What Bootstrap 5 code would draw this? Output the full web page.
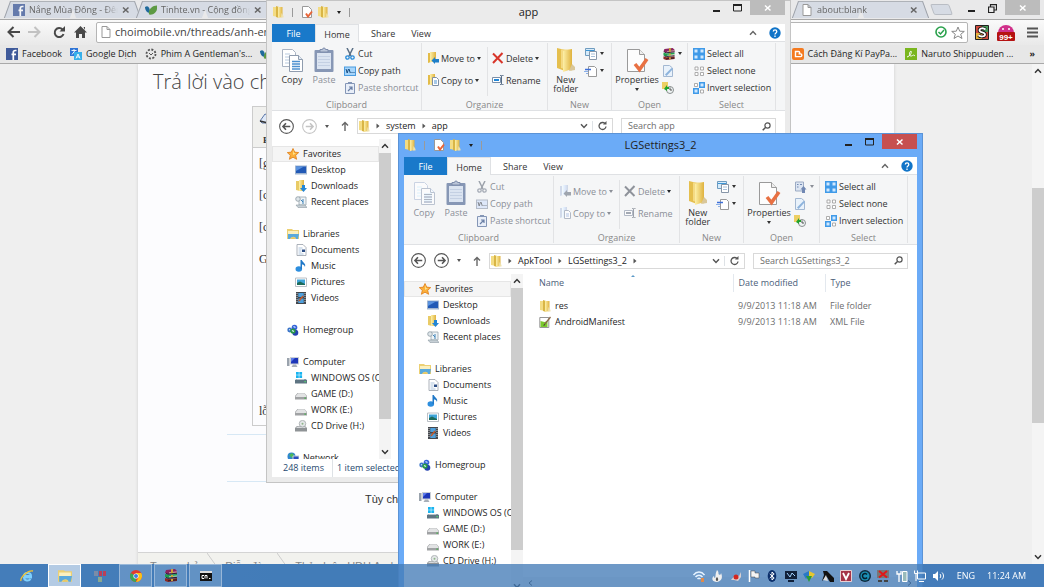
<!DOCTYPE html>
<html lang="en">
<head>
<meta charset="utf-8">
<meta name="viewport" content="width=device-width, initial-scale=1">
<title>Desktop</title>
<link href="https://cdn.jsdelivr.net/npm/bootstrap@5.3.0/dist/css/bootstrap.min.css" rel="stylesheet">
<style>
:root{--ui:"Open Sans","Noto Sans",sans-serif}
body{font:9px/16px var(--ui);color:#1e1e1e;background:linear-gradient(90deg,#4c88c6,#4380be 30%,#4a84c6);overflow:hidden}
a{color:inherit;text-decoration:none}
svg{display:block;flex:none}
.btn{--bs-btn-padding-x:0;--bs-btn-padding-y:0;--bs-btn-border-width:0;--bs-btn-font-size:9px;--bs-btn-line-height:9px;--bs-btn-border-radius:0;--bs-btn-color:#333;font-family:var(--ui)}
.btn:disabled{opacity:1;color:#8b8f97}
.btn:disabled svg.tint{filter:grayscale(1) sepia(.35) hue-rotate(180deg) saturate(1.4) opacity(.65)}
.i12{width:12px;height:12px}.i14{width:14px;height:12px}
/* browser */
.browser{height:calc(100vh - 23px);background:#efefef}
.tabstrip{height:19px;background:#e9e9ea;padding-left:7px}
.tab{position:relative;width:132px;height:18px;padding:1px 9px 0 6px;color:#666;z-index:0}
.tab::before,.tab::after{content:"";position:absolute;z-index:-1;top:1px;bottom:0;background:#d6dbe4;border-top:1px solid #aeb2b8}
.tab::before{left:0;right:50%;transform:skewX(-20deg);border-left:1px solid #9da1a8}
.tab::after{left:50%;right:1px;transform:skewX(20deg);border-right:1px solid #9da1a8}
.tab .label{white-space:nowrap;overflow:hidden;-webkit-mask-image:linear-gradient(90deg,#000 85%,transparent)}
.tabgap{width:524px}
.newtab{width:19px;height:11px;margin:4px 0 0 5px;background:#d6dbe4;border:1px solid #b9bdc4;transform:skewX(20deg);border-radius:2px}
.winbtn{width:35px;height:15px;background:#bcbcbc;color:#fff}
.toolbar{height:27px;background:linear-gradient(#fafafa,#e9e9e9);border-top:1px solid #a8a8a8;padding:0 6px 0 7px}
.omni{height:21px;border:1px solid #b5b5b5;border-radius:2px;background:#fff;padding:0 2px 0 4px;margin:0 7px 0 9px}
.omni input{border:0;outline:0;background:none;font:11px/18px var(--ui);color:#444;min-width:0;width:100%;padding:0}
.marks{height:19px;background:#e7e7e7;border-bottom:1px solid #a9a9a9;padding:0 9px 0 6px;white-space:nowrap}
.sheet{width:756px;background:#fcfcfe;box-shadow:0 0 3px #ccc;color:#333}
.sheet h1{font:300 20px/28px var(--ui);color:#444;padding:4px 0 0 15px;margin:0;height:42px}
.editor{margin:0 0 0 114px;width:480px;height:320px;border:1px solid #ccc;background:#fcfcfe}
.edbar{height:41px;background:#f0f0ee;border-bottom:1px solid #ccc;padding:5px 6px}
.edtext{font:12px/16px "Liberation Serif",serif;padding:7px 6px;height:278px}
.rule{border-top:1px solid #d7e8f5;margin:0 60px 0 89px}
.rule2{margin-top:46px}
.crumbs{height:22px;background:#f2f2ee;border-top:1px solid #d4d4d4;font:11px/26px "Liberation Sans",sans-serif;color:#888;padding-left:12px}
.vbar{width:12px;background:#f4f4f4;flex:none;color:#333}
.thumb{background:#cdcdcd}
/* explorer windows */
.win{position:absolute;width:525px;padding:0 6px 6px;background:#ebebeb;box-shadow:inset 0 0 0 1px #c4c4c4}
.win.on{background:#6babf7;box-shadow:inset 0 0 0 1px #5b93d6}
.w1{left:266px;top:0;height:483px}
.w2{left:398px;top:133px;height:470px}
.title{height:24px}
.title h2{font:11px/24px var(--ui);margin:0;color:#222}
.title .quick{position:absolute;left:0;top:6px;gap:4px}
.title .ctl{position:absolute;right:0;top:0}
.on .title .ctl{top:1px}
.on .winbtn{background:#c75050}
.bar1{width:1px;height:9px;background:#9a9a9a}
.rtabs{height:18px;background:#fff;border-bottom:1px solid #dfe1e4;line-height:19px}
.rtabs button{height:18px;padding:1px 0 0;line-height:17px}
.filetab{width:43px;background:#1979ca!important;color:#fff!important}
.hometab{width:44px;background:#f5f6f7!important;border:1px solid #dfe1e4!important;border-bottom:0!important}
.ribbon{height:70px;background:#f5f6f7;border-bottom:1px solid #dfe1e4}
.grp{border-right:1px solid #e2e3e5;margin-top:1px;height:67px}
.grp .area{height:53px;padding-top:2px}
.grp .cap{height:16px;line-height:18px;text-align:center;color:#888}
.g1{width:150px}.g2{width:126px}.g3{width:64px}.g4{width:76px}.g5{width:88px}
.g2 .area,.g5 .area{padding-left:5px}
.r17 .btn{height:17px;display:flex;align-items:center;gap:2px;white-space:nowrap}
.r22 .btn{height:22px;display:flex;align-items:center;gap:2px;white-space:nowrap}
.big{width:32px;display:flex;flex-direction:column;align-items:center;line-height:9px}
.big svg{width:24px;height:26px;margin:2px 0}
.split{border-right:1px solid #e2e3e5;width:61px}
.dn{width:0;height:0;border:2px solid transparent;border-top:3px solid currentColor;border-bottom:0;flex:none}
.addr{height:29px;background:#fff;padding:2px 9px 0 7px;color:#555}
.addr .path{height:16px;border:1px solid #d9d9d9;color:#222}
.addr .path svg{color:#555}
.addr .sep{margin:0 6px}
.addr .search{width:155px;height:16px;border:1px solid #d9d9d9}
.addr input{border:0;outline:0;background:none;font:9px/14px var(--ui);color:#555;width:130px;padding:0 0 0 6px}
.addr input::placeholder{color:#6d6d6d;opacity:1}
.pane{background:#fff;min-height:0}
.tree{width:107px;flex:none;padding-top:7px;overflow:hidden;white-space:nowrap}
.tree a{display:flex;align-items:center;gap:4px;height:16px;padding-left:15px}
.tree a.sub{padding-left:23px}
.tree .sel{background:#f5f5f5;box-shadow:inset 0 0 0 1px #e6e6e6}
.tree .gap{height:16px}
.status{height:18px;background:#fff;color:#274a70;padding-left:11px;line-height:18px}
.files{table-layout:fixed;border-collapse:collapse;width:100%}
.files th{font-weight:400;color:#4c607a;height:18px;padding:0 0 0 5px;border-left:1px solid #e3e8ee}
.files td{padding:0 0 0 5px;height:16px;color:#6d6d6d;white-space:nowrap}
.files th:first-child,.files td:first-child{padding-left:16px;border-left:0;color:#1e1e1e}
.files th:first-child{color:#4c607a}
.files thead::after{content:"";display:block;height:6px}
.sorted{position:absolute;left:108px;top:1px;width:0;height:0;border:2px solid transparent;border-bottom:2px solid #5c9ac8;border-top:0}
.hbar{height:12px;background:#f0f0f0;padding:0 5px}
/* taskbar */
.task{height:23px;background:rgba(67,122,182,.77);color:#fff;padding-right:3px}
.task .tb{height:23px;width:33px;margin-right:2px;display:flex;align-items:center;justify-content:center}
.task .run{background:rgba(255,255,255,.17);border:1px solid rgba(255,255,255,.35)}
.task .cur{background:rgba(255,255,255,.6);border:1px solid #fff}
.tray{width:252px}
.clock{width:50px}
</style>
</head>
<body class="vh-100 position-relative">

<svg width="0" height="0" class="position-absolute">
<defs>
<linearGradient id="gf" x1="0" x2="1"><stop offset="0" stop-color="#fdf0a8"/><stop offset="1" stop-color="#dfb23e"/></linearGradient>
<symbol id="folder" viewBox="0 0 12 12"><path d="M1 1h3l2 1v9l-5-1z" fill="#f3dc84"/><path d="M4 0l3 1v11l-3-1z" fill="#d9b545"/><path d="M6 1h4.500v10L6 12z" fill="url(#gf)"/><path d="M9.500 7l2 3v1.500H9z" fill="#efe2ae"/></symbol>
<symbol id="check" viewBox="0 0 12 12"><path d="M1.500.5h6l3 3v8h-9z" fill="#fff" stroke="#999"/><path d="M5 7.500l2 3L11 5.500" fill="none" stroke="#e8663a" stroke-width="2"/></symbol>
<symbol id="bigcopy" viewBox="0 0 24 26"><path d="M2.500 2.500h10l3 3v14h-13z" fill="#fff" stroke="#a9b3c2"/><path d="M5 7h5M5 10h6M5 13h6M5 16h4" stroke="#b7c9de"/><path d="M9.500 8.500h9l4 4v12h-13z" fill="#fff" stroke="#8f9cae"/><path d="M18.500 8.500v4h4" fill="#e4ecf6" stroke="#8f9cae"/><path d="M12 14.500h8M12 17h8M12 19.500h8M12 22h8" stroke="#4d91d0" stroke-width="1.500"/></symbol>
<symbol id="bigpaste" viewBox="0 0 24 26"><rect x="2.500" y="3" width="19" height="22" rx="1" fill="#8797b5"/><path d="M5 6h14v16H5z" fill="#dbe4f1"/><path d="M6 9.500h12M6 12.500h12M6 15.500h12M6 18.500h12" stroke="#c4d0e3"/><path d="M8 5V2.500h2.500a1.500 1.500 0 013 0H16V5z" fill="#b9c4d8" stroke="#7d8cab"/></symbol>
<symbol id="bigfolder" viewBox="0 0 24 26"><path d="M3 1l8 2v21l-8-3z" fill="#e5bf4e"/><path d="M7 2.500h11v21L7 21z" fill="#f4da84"/><path d="M9 4l9-2v20l-9 3z" fill="url(#gf)"/><path d="M18 17l3 3v3l-6 1z" fill="#d9c79a"/></symbol>
<symbol id="bigprops" viewBox="0 0 24 26"><path d="M2.500 2.500h12l5 5v17h-17z" fill="#fdfdfd" stroke="#9a9a9a"/><path d="M14.500 2.500v5h5" fill="#eee" stroke="#9a9a9a"/><path d="M10 17l4.500 5.500L22 12" fill="none" stroke="#e87042" stroke-width="3.500"/></symbol>
<symbol id="cut" viewBox="0 0 12 12"><path d="M3 0l4 8M9 0L5 8" stroke="#5a6f86" stroke-width="1.500"/><circle cx="3.500" cy="9.500" r="1.700" fill="none" stroke="#2589d8" stroke-width="1.300"/><circle cx="8.500" cy="9.500" r="1.700" fill="none" stroke="#2589d8" stroke-width="1.300"/></symbol>
<symbol id="cpath" viewBox="0 0 12 12"><rect x=".5" y="2" width="11" height="8.500" fill="#a6d5fb" stroke="#4a9ce0"/><path d="M2 4l1.200 4L4.500 4M5 4l1.300 4M7.500 7.500H8.500M9.500 7.500h1" fill="none" stroke="#174c80"/></symbol>
<symbol id="pshort" viewBox="0 0 12 12"><path d="M1.500 1.500h9v10h-9z" fill="#e8eef8" stroke="#8496b6"/><path d="M4 0h4v2H4z" fill="#8496b6"/><path d="M4 9l3.500-3.500M5 5h3v3" fill="none" stroke="#6b80a6" stroke-width="1.200"/></symbol>
<symbol id="moveto" viewBox="0 0 12 12"><path d="M1 1h3v9l-3 1z" fill="#e3bc48"/><path d="M3 0h6v10H3z" fill="url(#gf)"/><path d="M4.500 8.500L8 5v2h4v3.500H8v1.500z" fill="#1e7fc9"/></symbol>
<symbol id="copyto" viewBox="0 0 12 12"><path d="M1 1h3v9l-3 1z" fill="#e3bc48"/><path d="M3 0h5v11H3z" fill="url(#gf)"/><path d="M5.500 3.500h4l2 2v6h-6z" fill="#fff" stroke="#7e8ea3"/><path d="M7 7h3M7 9h3" stroke="#4d91d0"/></symbol>
<symbol id="del" viewBox="0 0 12 12"><path d="M1 1.500l9.500 9.500M10.500 1L1 11" stroke="#d8352a" stroke-width="2"/></symbol>
<symbol id="ren" viewBox="0 0 12 12"><path d="M.5 3.500h8v5h-8z" fill="#fff" stroke="#7a8fa8"/><path d="M2 5h5v2H2z" fill="#1f86d8"/><path d="M8 1.500c1.500 0 1.500 0 1.500 1v7c0 1 0 1-1.500 1M11.500 1.500c-2 0-2 0-2 1v7c0 1 0 1 2 1" fill="none" stroke="#556b85"/></symbol>
<symbol id="nitem" viewBox="0 0 14 12"><path d="M1.500.5h9v7h-9z" fill="#d6ebfa" stroke="#6f9cc0"/><path d="M2 2.500h8" stroke="#3d95d5"/><path d="M5.500 3.500h7v8h-7z" fill="#fff" stroke="#8796a8"/><path d="M7 6h4M7 8.500h4" stroke="#a7bfd8"/></symbol>
<symbol id="easy" viewBox="0 0 14 12"><path d="M4.500 1.500h6l2 2v8h-8z" fill="#fff" stroke="#999"/><path d="M1 4.500h6" stroke="#3d6fd8" stroke-width="1.500"/><path d="M0 6.500h4M2 8.500h2" stroke="#8bb0e8"/></symbol>
<symbol id="rar" viewBox="0 0 14 13"><path d="M2 1l9-1 2 2v2L4 5 1 4z" fill="#8a2460"/><path d="M1 5l3 1 9-1v2L4 9 1 8z" fill="#1fa04e"/><path d="M1 9l3 1 9-1v3l-9 1-3-1z" fill="#8c2a24"/><path d="M2 4.500l2 .7 9-1M2 8.500l2 .8 9-1M4 11.800l9-1" fill="none" stroke="#2a1a2a"/><path d="M5 3.800l8-.9M5 7.800l8-.9" stroke="#e8e3c8" stroke-width=".7"/><path d="M7 0l2 0v4l-2 .3zM7 6h2v2H7zM7 10h2v2H7z" fill="#c9a33a"/></symbol>
<symbol id="openg" viewBox="0 0 14 12"><path d="M1.500 1h8v9h-8z" fill="#dce5f2" stroke="#9cabc4"/><path d="M3 3.500h1.500M3 6h1.500M6 3.500h2" stroke="#7188b3"/><path d="M9.500 5l3 3.500h-1.500V12H8V8.500H6.500z" fill="#7188b3"/></symbol>
<symbol id="edit" viewBox="0 0 12 12"><path d="M1.500.500h6l3 2.500v8.500h-9z" fill="#e9f2fb" stroke="#a3b8d2"/><path d="M3 9.500L9.500 3l1.500 1L4.500 11z" fill="#8db3dc"/></symbol>
<symbol id="hist" viewBox="0 0 12 12"><path d="M0 0h6v7H0z" fill="#edcf63"/><circle cx="8" cy="8" r="3.500" fill="#eef3f3" stroke="#8a8f8f"/><path d="M8 5.500V8h2" fill="none" stroke="#555"/><path d="M2 7l3-4v2h2v2H5v2z" fill="#21a32c"/></symbol>
<symbol id="sall" viewBox="0 0 12 12"><path d="M0 0h12v12H0z" fill="#3f9ae8"/><path d="M1.500 1.500h3v3h-3zM7.500 1.500h3v3h-3zM1.500 7.500h3v3h-3zM7.500 7.500h3v3h-3z" fill="#cfe8ff"/></symbol>
<symbol id="snone" viewBox="0 0 12 12"><path d="M2 2h3v3H2zM7.500 2h3v3h-3zM2 7.500h3v3H2zM7.500 7.500h3v3h-3z" fill="#fff" stroke="#9a9a9a" stroke-width=".8"/></symbol>
<symbol id="sinv" viewBox="0 0 12 12"><path d="M1.500 1.500h3v3h-3zM7.500 8h3v3h-3z" fill="#fff" stroke="#9a9a9a" stroke-width=".8"/><path d="M6 0h6v6H6zM0 6h6v6H0z" fill="#3f9ae8"/><path d="M7.500 1.500h3v3h-3zM1.500 7.500h3v3h-3z" fill="#cfe8ff"/></symbol>
<symbol id="back" viewBox="0 0 14 14"><circle cx="7" cy="7" r="6.400" fill="none" stroke="currentColor"/><path d="M10.500 7H4M6.500 4L3.700 7l2.800 3" fill="none" stroke="currentColor" stroke-width="1.500"/></symbol>
<symbol id="fwd" viewBox="0 0 14 14"><circle cx="7" cy="7" r="6.400" fill="none" stroke="currentColor"/><path d="M3.500 7H10M7.500 4l2.800 3-2.800 3" fill="none" stroke="currentColor" stroke-width="1.500"/></symbol>
<symbol id="up" viewBox="0 0 8 10"><path d="M4 10V1.500M1 4.500l3-3 3 3" fill="none" stroke="#666" stroke-width="1.400"/></symbol>
<symbol id="cv" viewBox="0 0 6 5"><path d="M.5 1L3 3.700 5.500 1" fill="none" stroke="currentColor" stroke-width="1.200"/></symbol>
<symbol id="cu" viewBox="0 0 6 5"><path d="M.5 4L3 1.300 5.500 4" fill="none" stroke="currentColor" stroke-width="1.200"/></symbol>
<symbol id="tri" viewBox="0 0 4 6"><path d="M.5.5L3.500 3 .5 5.500z" fill="#555"/></symbol>
<symbol id="re" viewBox="0 0 10 10"><path d="M7.500 2.500A3.500 3.500 0 108.500 5.500" fill="none" stroke="currentColor" stroke-width="1.300"/><path d="M5.500 3.500H9V0z" fill="currentColor"/></symbol>
<symbol id="mag" viewBox="0 0 9 9"><circle cx="5.500" cy="3.500" r="2.600" fill="none" stroke="#555" stroke-width="1.200"/><path d="M3.700 5.300L.7 8.300" stroke="#555" stroke-width="1.500"/></symbol>
<symbol id="min" viewBox="0 0 8 8"><path d="M0 6h7v2H0z" fill="#222"/></symbol>
<symbol id="max" viewBox="0 0 9 8"><path d="M.5.500h8v6.500h-8z" fill="none" stroke="#222"/><path d="M0 0h9v2H0z" fill="#222"/></symbol>
<symbol id="rest" viewBox="0 0 9 9"><path d="M.5 3h5.500v5.500H.5zM2.500 3V.7h6V6H6" fill="none" stroke="#222" stroke-width="1.200"/></symbol>
<symbol id="x" viewBox="0 0 8 8"><path d="M1 1.500l5.500 5M6.500 1.500l-5.500 5" stroke="currentColor" stroke-width="1.500"/></symbol>
<symbol id="help" viewBox="0 0 12 12"><circle cx="6" cy="6" r="5.700" fill="#1074c8"/><path d="M4.300 4.500c0-2.300 3.500-2.300 3.500 0C7.800 6 6 5.800 6 7.500M6 8.500V10" fill="none" stroke="#fff" stroke-width="1.300"/></symbol>
<symbol id="star" viewBox="0 0 12 12"><path d="M6 .5l1.700 3.600 4 .5-3 2.700.9 4L6 9.200l-3.600 2.100.9-4-3-2.700 4-.5z" fill="#fbb03b" stroke="#e07d18" stroke-width=".8"/><path d="M6 2l1 3 2 .3L6 7z" fill="#fde08a"/></symbol>
<symbol id="desk" viewBox="0 0 12 12"><path d="M0 1.500h12v9H0z" fill="#9fb4d0"/><path d="M1 2.500h10v6.500H1z" fill="#2159b6"/><path d="M1 2.500h8L1 7z" fill="#5a93e0"/></symbol>
<symbol id="down" viewBox="0 0 12 12"><path d="M1 1h4v10l-4-1z" fill="#e9cb66"/><path d="M4 0h5v11H4z" fill="url(#gf)"/><path d="M7 5h3v3h2l-3.500 4L5 8h2z" fill="#2386d6"/></symbol>
<symbol id="recent" viewBox="0 0 12 12"><path d="M4 1h7v8H4z" fill="#eef3f6" stroke="#98a5ae" stroke-width=".8"/><path d="M1 9h9l2 2.500H3z" fill="#c7d0d6" stroke="#8d9aa3" stroke-width=".6"/><circle cx="3" cy="3" r="2.300" fill="#dfe6ea" stroke="#8d9aa3" stroke-width=".8"/><path d="M6 4l2 2M8 3v5" stroke="#3f83b8"/></symbol>
<symbol id="lib" viewBox="0 0 12 12"><path d="M0 1h5l1 1h6v9H0z" fill="#ecd073"/><path d="M1 3h10v3H1z" fill="#faf0c0"/><path d="M1 6h11l-1 5H9c0-3-5-3-6 0H1z" fill="#5aa9dc"/><path d="M4 11c1-2 3-2 4 0z" fill="#e8c865"/></symbol>
<symbol id="doc" viewBox="0 0 12 12"><path d="M2 .5h6l3 3v8H2z" fill="#fff" stroke="#98a0aa" stroke-width=".8"/><path d="M3.500 4h4M3.500 6h3M3.500 8h3M3.500 10h5" stroke="#9bb6d4" stroke-width=".8"/><path d="M7 5.500h3v2.500H7z" fill="#2d4f86"/></symbol>
<symbol id="music" viewBox="0 0 12 12"><ellipse cx="3.800" cy="9" rx="3.300" ry="2.700" fill="#2d8ede"/><path d="M5.500 0h1.300c.5 2.500 4.500 3 3.200 7-.5-2-2-2.500-3-2.500V9H5.500z" fill="#2179c8"/></symbol>
<symbol id="pic" viewBox="0 0 12 12"><path d="M.5 2h11v8.500H.5z" fill="#fff" stroke="#a9b0b8" stroke-width=".8"/><path d="M2 3.500h8v5.500H2z" fill="#3fa4d8"/><path d="M2 9V7l3-1.500L10 8v1z" fill="#1d6b5a"/></symbol>
<symbol id="vid" viewBox="0 0 12 12"><path d="M1 0h10v12H1z" fill="#44484e"/><path d="M3.300 1h5.400v4H3.300zM3.300 6.500h5.400v4.500H3.300z" fill="#4fa0dc"/><path d="M4 9l4-5" stroke="#c45a2a" stroke-width="1.500"/><path d="M2 1v10M10 1v10" stroke="#ddd" stroke-width=".9" stroke-dasharray="1 1"/></symbol>
<symbol id="home" viewBox="0 0 12 12"><circle cx="7.500" cy="3.500" r="2.800" fill="#3563d8"/><circle cx="2.700" cy="6" r="2.400" fill="#3a74c8"/><circle cx="8.300" cy="8.700" r="3" fill="#2442b0"/><circle cx="6" cy="7" r="2.600" fill="#2a9a44"/><path d="M6.500 2.500l2 1M2 5.500l1 .5M5 6.500l2 1" stroke="#d7ecff" stroke-width="1.200"/></symbol>
<symbol id="comp" viewBox="0 0 12 12"><path d="M0 2h2.500v8H0z" fill="#9aa3ad"/><path d="M3 1h9v7.500H3z" fill="#c9ced6"/><path d="M4 2h7v5.500H4z" fill="#1c35b8"/><path d="M4 2h4L4 6z" fill="#5d7bea"/><path d="M6 8.500h3l1.500 2.500h-6z" fill="#a8afb8"/></symbol>
<symbol id="osd" viewBox="0 0 12 12"><path d="M0 8l2-1h8l2 1v3.500H0z" fill="#5e7482"/><path d="M1 0h2.800v2.800H1zM4.300 0h2.800v2.800H4.300zM1 3.300h2.800V6H1zM4.300 3.300h2.800V6H4.300z" fill="#18b4f0"/><path d="M2 7h7l1 1H1z" fill="#b6c3cb"/><path d="M9.500 9h1.300v1.300H9.500z" fill="#4fe06a"/></symbol>
<symbol id="hdd" viewBox="0 0 12 12"><path d="M0 8l2.500-3h7L12 8v3.500H0z" fill="#a0a2a4"/><path d="M.6 8.300L3 5.300h6.500L11.500 8.300v.7H.6z" fill="#e2e3e4"/><path d="M9.500 9.500h1.300v1.300H9.500z" fill="#37b03e"/></symbol>
<symbol id="cdd" viewBox="0 0 12 12"><path d="M0 8l2-2h8l2 2v3.500H0z" fill="#8f9396"/><path d="M1 8l1.500-1.500h7L11 8z" fill="#d8dadc"/><circle cx="7.500" cy="3.700" r="3.300" fill="#e4e7e8" stroke="#9ba0a3" stroke-width=".7"/><circle cx="7.500" cy="3.700" r="1" fill="#8fb58a"/></symbol>
<symbol id="net" viewBox="0 0 12 12"><circle cx="4.500" cy="4.500" r="4" fill="#2f86d0"/><path d="M2 3l3-2 2 2-2 3z" fill="#4db85a"/><path d="M6 4h6v5H6z" fill="#2a4dc0" stroke="#c6ced8"/></symbol>
<symbol id="xml" viewBox="0 0 12 12"><path d="M.8 1.500h9v10h-9z" fill="#fff" stroke="#8a8a8a" stroke-width=".9"/><path d="M1.500 5l4 1 3-1v6h-7z" fill="#7ac92e"/><path d="M5 8L11 .5l1 .9L6 9z" fill="#8a6a4a"/><path d="M5 8l-.5 2L6 9z" fill="#222"/></symbol>
<symbol id="fb" viewBox="0 0 12 12"><path d="M0 0h12v12H0z" fill="#3f5a9a"/><path d="M10.500 2.500H9.300C8 2.500 7.300 3.300 7.300 4.500V12M5.500 6.300h4.500" fill="none" stroke="#fff" stroke-width="1.700"/></symbol>
<symbol id="leaf" viewBox="0 0 12 12"><path d="M0 3c3-2 5 0 5 6C2 9 0 6 0 3z" fill="#1f6a9c"/><path d="M4 10.500c-1-5 3-9 8-9 1 6-3 10-8 9z" fill="#5d9a44"/></symbol>
<symbol id="page" viewBox="0 0 10 12"><path d="M1 .5h5l3 3v8H1zM6 .5v3h3" fill="#fff" stroke="#999"/></symbol>
</defs>
</svg>

<!-- browser window -->
<main class="browser d-flex flex-column overflow-hidden">
  <div class="tabstrip d-flex flex-none">
    <div class="tab d-flex align-items-center gap-1"><svg class="i12 opacity-75"><use href="#fb"/></svg><span class="label flex-fill">Nắng Mùa Đông - Đêm</span><button class="btn" aria-label="Close tab"><svg width="8" height="8" color="#666"><use href="#x"/></svg></button></div>
    <div class="tab d-flex align-items-center gap-1"><svg class="i12"><use href="#leaf"/></svg><span class="label flex-fill">Tinhte.vn - Cộng đồng</span><button class="btn" aria-label="Close tab"><svg width="8" height="8" color="#666"><use href="#x"/></svg></button></div>
    <div class="tabgap"></div>
    <div class="tab d-flex align-items-center gap-1"><svg class="i12"><use href="#page"/></svg><span class="label flex-fill">about:blank</span><button class="btn" aria-label="Close tab"><svg width="8" height="8" color="#666"><use href="#x"/></svg></button></div>
    <button class="newtab p-0" aria-label="New tab"></button>
    <div class="d-flex ms-auto gap-2"><button class="btn align-self-start mt-1 me-1" aria-label="Minimize"><svg width="8" height="8"><use href="#min"/></svg></button><button class="btn align-self-start mt-1" aria-label="Restore"><svg width="9" height="9"><use href="#rest"/></svg></button><button class="btn winbtn d-flex align-items-center justify-content-center me-1" aria-label="Close"><svg width="8" height="8"><use href="#x"/></svg></button></div>
  </div>
  <div class="toolbar d-flex align-items-center">
    <button class="btn" aria-label="Back"><svg width="13" height="12"><path d="M13 6H2M6.500 1L1.500 6l5 5" fill="none" stroke="#484848" stroke-width="2"/></svg></button>
    <button class="btn ms-2" aria-label="Forward"><svg width="13" height="12"><path d="M0 6h11M6.500 1l5 5-5 5" fill="none" stroke="#c2c2c2" stroke-width="2"/></svg></button>
    <button class="btn ms-2 ps-1" aria-label="Reload"><svg width="13" height="13"><path d="M9.500 3.500A4.500 4.500 0 1010.500 8" fill="none" stroke="#484848" stroke-width="2"/><path d="M6.500 5.500H12V0z" fill="#484848"/></svg></button>
    <button class="btn ms-2" aria-label="Home"><svg width="13" height="12"><path d="M6.500 0L13 6.500h-2V12H8V8H5v4H2V6.500H0zM9.500 1H11v3z" fill="#484848"/></svg></button>
    <div class="omni d-flex align-items-center flex-fill gap-1">
      <svg width="10" height="12"><use href="#page"/></svg>
      <input aria-label="Address" value="choimobile.vn/threads/anh-em-vao-giup">
      <svg width="12" height="12"><circle cx="6" cy="6" r="5" fill="#fff" stroke="#2aa14c" stroke-width="1.600"/><path d="M3.500 6l2 2L9 4" fill="none" stroke="#2aa14c" stroke-width="1.500"/></svg>
      <svg width="14" height="13"><path d="M7 1l1.700 4.200 4.600.2-3.600 2.900 1.300 4.200L7 10l-4 2.500 1.300-4.200L.7 5.400l4.600-.2z" fill="#fff" stroke="#888"/></svg>
    </div>
    <svg width="14" height="15" viewBox="0 0 14 15"><path d="M.5.500h13v14H.5z" fill="#cf4b3d" stroke="#222"/><path d="M7 1h6v6H7z" fill="#4a9b5a"/><path d="M1 8h6v6H1z" fill="#e5b13c"/><path d="M10.500 4.500c-2-2-6-1.500-6 .7C4.500 8 10 6.500 10 9.500c0 2.500-4.500 2.500-6.500.8" fill="none" stroke="#111" stroke-width="3.500"/><path d="M10.500 4.500c-2-2-6-1.500-6 .7C4.500 8 10 6.500 10 9.500c0 2.500-4.500 2.500-6.500.8" fill="none" stroke="#fff" stroke-width="1.800"/></svg>
    <svg class="ms-2" width="18" height="17" viewBox="0 0 18 17"><path d="M1 9a8 8 0 0116 0z" fill="#d0308a"/><circle cx="6" cy="5" r="1" fill="#fff"/><circle cx="12" cy="5" r="1" fill="#fff"/><rect y="8" width="18" height="9" rx="1" fill="#b51212"/><text x="9" y="15.500" text-anchor="middle" font-family="Liberation Sans" font-weight="700" font-size="8" fill="#fff">99+</text></svg>
    <button class="btn ms-2 ps-1" aria-label="Menu"><svg width="11" height="11"><path d="M0 1.500h11M0 5.500h11M0 9.500h11" stroke="#555" stroke-width="2.200"/></svg></button>
  </div>
  <nav class="marks d-flex align-items-center" aria-label="Bookmarks">
    <a href="#" class="d-flex align-items-center gap-1"><svg class="i12"><use href="#fb"/></svg>Facebook</a>
    <a href="#" class="d-flex align-items-center gap-1 ms-2"><svg class="i12" viewBox="0 0 12 12"><path d="M0 0h8v8H0z" fill="#2f75d6"/><path d="M4 4h8v8H4z" fill="#39b0ea"/><path d="M1.500 2.500h5M4 1v1.500M2 6.500l3-4" stroke="#fff" stroke-width=".9"/><path d="M6 10.500L8 6l2 4.500M6.700 9h2.600" fill="none" stroke="#fff" stroke-width=".9"/></svg>Google Dịch</a>
    <a href="#" class="d-flex align-items-center gap-1 ms-2"><svg class="i12" viewBox="0 0 12 12"><circle cx="6" cy="6" r="4.500" fill="none" stroke="#555" stroke-width="1.800" stroke-dasharray="2 1.500"/><path d="M4 5l2 2 2-2" stroke="#555" fill="none"/></svg>Phim A Gentleman's...</a>
    <a href="#" class="d-flex ms-2" aria-label="Tinhte"><svg class="i12"><use href="#leaf"/></svg></a>
    <a href="#" class="d-flex align-items-center gap-1 ms-auto"><svg class="i12" viewBox="0 0 12 12"><rect width="12" height="12" rx="2" fill="#f47a20"/><path d="M3.500 3.500h3a1.200 1.200 0 010 2.400h2a1.300 1.300 0 010 2.700h-5z" fill="none" stroke="#fff" stroke-width="1.400"/></svg>Cách Đăng Kí PayPa...</a>
    <a href="#" class="d-flex align-items-center gap-1 ms-2"><svg class="i12" viewBox="0 0 12 12"><path d="M0 0h12v12H0z" fill="#7ab61e"/><path d="M2 9c3-1 5-4 4-6-2 1-2 5 0 5s2-2 4 0" fill="none" stroke="#fff"/></svg>Naruto Shippuuden ...</a>
    <a href="#" class="ms-3 fw-bold">»</a>
  </nav>
  <div class="d-flex flex-fill overflow-hidden">
    <div class="flex-fill">
      <article class="sheet mx-auto">
        <h1>Trả lời vào chủ đề</h1>
        <div class="editor">
          <div class="edbar"><svg width="14" height="12" viewBox="0 0 14 12"><path d="M1 9l5-7 7 3-4 6H3z" fill="#dfe9f8" stroke="#5c77a8"/><path d="M1 9l8 2" stroke="#333" stroke-width="1.500"/></svg><b style="font-family:'Liberation Serif',serif" class="d-block mt-2 ps-1">B</b></div>
          <div class="edtext d-flex flex-column justify-content-between"><div>[g<br><br>[c<br><br>[c<br><br>G</div><div>lỗi</div></div>
        </div>
        <div class="pt-2"><div class="rule"></div><div class="rule rule2"></div></div>
        <div style="font:11px/34px 'Liberation Sans',sans-serif;height:70px;padding-left:227px">Tùy chọn</div>
        <nav class="crumbs d-flex gap-2" aria-label="Breadcrumb"><a href="#">Trang chủ</a><svg width="10" height="22"><path d="M0 0l10 14" stroke="#ccc"/></svg><a href="#">Diễn đàn</a><svg width="10" height="22"><path d="M0 0l10 14" stroke="#ccc"/></svg><a href="#">Thảo luận HDH Android</a></nav>
      </article>
    </div>
    <div class="vbar d-flex flex-column align-items-center"><svg width="8" height="6" class="my-1"><use href="#cu"/></svg><div style="height:22%"></div><div class="thumb w-100" style="height:47%"></div><svg width="8" height="6" class="mt-auto mb-1"><use href="#cv"/></svg></div>
  </div>
</main>

<!-- inactive explorer window -->
<section class="win w1 d-flex flex-column" aria-label="app">
  <header class="title position-relative text-center">
    <div class="quick d-flex align-items-center"><svg class="i12"><use href="#folder"/></svg><i class="bar1 me-1 ms-1"></i><svg class="i12"><use href="#check"/></svg><svg class="i12"><use href="#folder"/></svg><i class="dn ms-1"></i><i class="bar1 ms-1"></i></div>
    <h2>app</h2>
    <div class="ctl d-flex align-items-center"><svg width="8" height="8" class="me-2"><use href="#min"/></svg><svg width="9" height="8" class="ms-1 me-2"><use href="#max"/></svg><button class="btn winbtn d-flex align-items-center justify-content-center" aria-label="Close"><svg width="8" height="8"><use href="#x"/></svg></button></div>
  </header>
  <div class="rtabs d-flex align-items-center">
    <button class="btn filetab">File</button><button class="btn hometab">Home</button><button class="btn ms-2 px-1">Share</button><button class="btn ms-2 px-1">View</button>
    <svg width="8" height="6" color="#666" class="ms-auto me-2"><use href="#cu"/></svg><svg class="i12 ms-1 me-1"><use href="#help"/></svg>
  </div>
  <div class="ribbon d-flex">
    <div class="grp g1"><div class="area d-flex ps-1"><button class="btn big"><svg><use href="#bigcopy"/></svg>Copy</button><button class="btn big" disabled><svg><use href="#bigpaste"/></svg>Paste</button><div class="r17 ms-1"><button class="btn"><svg class="i12 tint"><use href="#cut"/></svg>Cut</button><button class="btn"><svg class="i12 tint"><use href="#cpath"/></svg>Copy path</button><button class="btn" disabled><svg class="i12"><use href="#pshort"/></svg>Paste shortcut</button></div></div><div class="cap">Clipboard</div></div>
    <div class="grp g2"><div class="area d-flex pt-1"><div class="r22 split"><button class="btn"><svg class="i12 tint"><use href="#moveto"/></svg>Move to <i class="dn"></i></button><button class="btn"><svg class="i12 tint"><use href="#copyto"/></svg>Copy to <i class="dn"></i></button></div><div class="r22 ms-1"><button class="btn"><svg class="i12 tint"><use href="#del"/></svg>Delete <i class="dn"></i></button><button class="btn"><svg class="i12 tint"><use href="#ren"/></svg>Rename</button></div></div><div class="cap">Organize</div></div>
    <div class="grp g3"><div class="area d-flex"><button class="btn big w-50 ps-1"><svg><use href="#bigfolder"/></svg>New<br>folder</button><div class="r17 ms-1"><button class="btn"><svg class="i14"><use href="#nitem"/></svg><i class="dn"></i></button><button class="btn"><svg class="i14"><use href="#easy"/></svg><i class="dn"></i></button></div></div><div class="cap">New</div></div>
    <div class="grp g4"><div class="area d-flex ps-1"><button class="btn big" style="width:42px"><svg><use href="#bigprops"/></svg>Properties<i class="dn mt-1"></i></button><div class="r17 ms-1"><button class="btn"><svg class="i14"><use href="#rar"/></svg><i class="dn"></i></button><button class="btn"><svg class="i12"><use href="#edit"/></svg></button><button class="btn"><svg class="i12"><use href="#hist"/></svg></button></div></div><div class="cap">Open</div></div>
    <div class="grp g5"><div class="area r17"><button class="btn"><svg class="i12"><use href="#sall"/></svg>Select all</button><button class="btn"><svg class="i12"><use href="#snone"/></svg>Select none</button><button class="btn"><svg class="i12"><use href="#sinv"/></svg>Invert selection</button></div><div class="cap">Select</div></div>
  </div>
  <div class="addr d-flex align-items-center gap-2">
    <svg width="15" height="15"><use href="#back"/></svg><svg width="15" height="15" color="#c4c4c4"><use href="#fwd"/></svg><i class="dn"></i><svg width="8" height="10" class="ms-1"><use href="#up"/></svg>
    <div class="path d-flex align-items-center flex-fill ms-n1"><svg class="i12"><use href="#folder"/></svg><svg width="4" height="6" class="sep"><use href="#tri"/></svg>system<svg width="4" height="6" class="sep"><use href="#tri"/></svg>app<svg width="8" height="6" class="ms-auto me-1"><use href="#cv"/></svg><span class="border-start px-1"><svg width="11" height="10"><use href="#re"/></svg></span></div>
    <div class="search d-flex align-items-center"><input aria-label="Search app" placeholder="Search app"><svg width="9" height="9" class="ms-auto me-1"><use href="#mag"/></svg></div>
  </div>
  <div class="pane d-flex flex-fill overflow-hidden">
    <nav class="tree">
      <a href="#" class="sel"><svg class="i12"><use href="#star"/></svg>Favorites</a><a href="#" class="sub"><svg class="i12"><use href="#desk"/></svg>Desktop</a><a href="#" class="sub"><svg class="i12"><use href="#down"/></svg>Downloads</a><a href="#" class="sub"><svg class="i12"><use href="#recent"/></svg>Recent places</a><div class="gap"></div>
      <a href="#"><svg class="i12"><use href="#lib"/></svg>Libraries</a><a href="#" class="sub"><svg class="i12"><use href="#doc"/></svg>Documents</a><a href="#" class="sub"><svg class="i12"><use href="#music"/></svg>Music</a><a href="#" class="sub"><svg class="i12"><use href="#pic"/></svg>Pictures</a><a href="#" class="sub"><svg class="i12"><use href="#vid"/></svg>Videos</a><div class="gap"></div>
      <a href="#"><svg class="i12"><use href="#home"/></svg>Homegroup</a><div class="gap"></div>
      <a href="#"><svg class="i12"><use href="#comp"/></svg>Computer</a><a href="#" class="sub"><svg class="i12"><use href="#osd"/></svg>WINDOWS OS (C:)</a><a href="#" class="sub"><svg class="i12"><use href="#hdd"/></svg>GAME (D:)</a><a href="#" class="sub"><svg class="i12"><use href="#hdd"/></svg>WORK (E:)</a><a href="#" class="sub"><svg class="i12"><use href="#cdd"/></svg>CD Drive (H:)</a><div class="gap"></div>
      <a href="#"><svg class="i12"><use href="#net"/></svg>Network</a>
    </nav>
    <div class="vbar d-flex flex-column align-items-center"><svg width="8" height="6" class="my-1"><use href="#cu"/></svg><div class="thumb w-100" style="height:83%"></div><svg width="8" height="6" class="mt-auto mb-1"><use href="#cv"/></svg></div>
  </div>
  <footer class="status d-flex"><span>248 items</span><span class="border-start ms-2 ps-1">1 item selected</span></footer>
</section>

<!-- active explorer window -->
<section class="win on w2 d-flex flex-column" aria-label="LGSettings3_2">
  <header class="title position-relative text-center">
    <div class="quick d-flex align-items-center"><svg class="i12"><use href="#folder"/></svg><i class="bar1 me-1 ms-1"></i><svg class="i12"><use href="#check"/></svg><svg class="i12"><use href="#folder"/></svg><i class="dn ms-1"></i><i class="bar1 ms-1"></i></div>
    <h2>LGSettings3_2</h2>
    <div class="ctl d-flex align-items-center"><svg width="8" height="8" class="me-2"><use href="#min"/></svg><svg width="9" height="8" class="ms-1 me-2"><use href="#max"/></svg><button class="btn winbtn d-flex align-items-center justify-content-center" aria-label="Close"><svg width="8" height="8"><use href="#x"/></svg></button></div>
  </header>
  <div class="rtabs d-flex align-items-center">
    <button class="btn filetab">File</button><button class="btn hometab">Home</button><button class="btn ms-2 px-1">Share</button><button class="btn ms-2 px-1">View</button>
    <svg width="8" height="6" color="#666" class="ms-auto me-2"><use href="#cu"/></svg><svg class="i12 ms-1 me-1"><use href="#help"/></svg>
  </div>
  <div class="ribbon d-flex">
    <div class="grp g1"><div class="area d-flex ps-1"><button class="btn big" disabled><svg class="tint"><use href="#bigcopy"/></svg>Copy</button><button class="btn big" disabled><svg><use href="#bigpaste"/></svg>Paste</button><div class="r17 ms-1"><button class="btn" disabled><svg class="i12 tint"><use href="#cut"/></svg>Cut</button><button class="btn" disabled><svg class="i12 tint"><use href="#cpath"/></svg>Copy path</button><button class="btn" disabled><svg class="i12"><use href="#pshort"/></svg>Paste shortcut</button></div></div><div class="cap">Clipboard</div></div>
    <div class="grp g2"><div class="area d-flex pt-1"><div class="r22 split"><button class="btn" disabled><svg class="i12 tint"><use href="#moveto"/></svg>Move to <i class="dn"></i></button><button class="btn" disabled><svg class="i12 tint"><use href="#copyto"/></svg>Copy to <i class="dn"></i></button></div><div class="r22 ms-1"><button class="btn" disabled><svg class="i12 tint"><use href="#del"/></svg>Delete <i class="dn text-dark"></i></button><button class="btn" disabled><svg class="i12 tint"><use href="#ren"/></svg>Rename</button></div></div><div class="cap">Organize</div></div>
    <div class="grp g3"><div class="area d-flex"><button class="btn big w-50 ps-1"><svg><use href="#bigfolder"/></svg>New<br>folder</button><div class="r17 ms-1"><button class="btn"><svg class="i14"><use href="#nitem"/></svg><i class="dn"></i></button><button class="btn"><svg class="i14"><use href="#easy"/></svg><i class="dn"></i></button></div></div><div class="cap">New</div></div>
    <div class="grp g4"><div class="area d-flex ps-1"><button class="btn big" style="width:42px"><svg><use href="#bigprops"/></svg>Properties<i class="dn mt-1"></i></button><div class="r17 ms-1"><button class="btn" disabled><svg class="i14"><use href="#openg"/></svg><i class="dn"></i></button><button class="btn"><svg class="i12"><use href="#edit"/></svg></button><button class="btn"><svg class="i12"><use href="#hist"/></svg></button></div></div><div class="cap">Open</div></div>
    <div class="grp g5"><div class="area r17"><button class="btn"><svg class="i12"><use href="#sall"/></svg>Select all</button><button class="btn"><svg class="i12"><use href="#snone"/></svg>Select none</button><button class="btn"><svg class="i12"><use href="#sinv"/></svg>Invert selection</button></div><div class="cap">Select</div></div>
  </div>
  <div class="addr d-flex align-items-center gap-2">
    <svg width="15" height="15"><use href="#back"/></svg><svg width="15" height="15"><use href="#fwd"/></svg><i class="dn"></i><svg width="8" height="10" class="ms-1"><use href="#up"/></svg>
    <div class="path d-flex align-items-center flex-fill ms-n1"><svg class="i12"><use href="#folder"/></svg><svg width="4" height="6" class="sep"><use href="#tri"/></svg>ApkTool<svg width="4" height="6" class="sep"><use href="#tri"/></svg>LGSettings3_2<svg width="4" height="6" class="sep"><use href="#tri"/></svg><svg width="8" height="6" class="ms-auto me-1"><use href="#cv"/></svg><span class="border-start px-1"><svg width="11" height="10"><use href="#re"/></svg></span></div>
    <div class="search d-flex align-items-center"><input aria-label="Search LGSettings3_2" placeholder="Search LGSettings3_2"><svg width="9" height="9" class="ms-auto me-1"><use href="#mag"/></svg></div>
  </div>
  <div class="pane d-flex flex-fill overflow-hidden">
    <nav class="tree">
      <a href="#" class="sel"><svg class="i12"><use href="#star"/></svg>Favorites</a><a href="#" class="sub"><svg class="i12"><use href="#desk"/></svg>Desktop</a><a href="#" class="sub"><svg class="i12"><use href="#down"/></svg>Downloads</a><a href="#" class="sub"><svg class="i12"><use href="#recent"/></svg>Recent places</a><div class="gap"></div>
      <a href="#"><svg class="i12"><use href="#lib"/></svg>Libraries</a><a href="#" class="sub"><svg class="i12"><use href="#doc"/></svg>Documents</a><a href="#" class="sub"><svg class="i12"><use href="#music"/></svg>Music</a><a href="#" class="sub"><svg class="i12"><use href="#pic"/></svg>Pictures</a><a href="#" class="sub"><svg class="i12"><use href="#vid"/></svg>Videos</a><div class="gap"></div>
      <a href="#"><svg class="i12"><use href="#home"/></svg>Homegroup</a><div class="gap"></div>
      <a href="#"><svg class="i12"><use href="#comp"/></svg>Computer</a><a href="#" class="sub"><svg class="i12"><use href="#osd"/></svg>WINDOWS OS (C:)</a><a href="#" class="sub"><svg class="i12"><use href="#hdd"/></svg>GAME (D:)</a><a href="#" class="sub"><svg class="i12"><use href="#hdd"/></svg>WORK (E:)</a><a href="#" class="sub"><svg class="i12"><use href="#cdd"/></svg>CD Drive (H:)</a>
    </nav>
    <div class="vbar d-flex flex-column align-items-center"><svg width="8" height="6" class="my-1"><use href="#cu"/></svg><div class="thumb w-100" style="height:81%"></div><svg width="8" height="6" class="mt-auto mb-2"><use href="#cv"/></svg></div>
    <div class="flex-fill position-relative d-flex flex-column justify-content-between">
      <table class="files">
        <colgroup><col style="width:210px"><col style="width:92px"><col></colgroup>
        <thead><tr><th>Name</th><th>Date modified</th><th>Type</th></tr></thead>
        <tbody>
          <tr><td><span class="d-flex align-items-center gap-1"><svg class="i12"><use href="#folder"/></svg>res</span></td><td>9/9/2013 11:18 AM</td><td>File folder</td></tr>
          <tr><td><span class="d-flex align-items-center gap-1"><svg class="i12"><use href="#xml"/></svg>AndroidManifest</span></td><td>9/9/2013 11:18 AM</td><td>XML File</td></tr>
        </tbody>
      </table>
      <i class="sorted"></i>
      <div class="hbar d-flex align-items-center justify-content-between mb-2"><svg width="5" height="6"><path d="M4 .5L1 3l3 2.500" fill="none" stroke="#333"/></svg><svg width="5" height="6"><path d="M1 .5L4 3 1 5.500" fill="none" stroke="#333"/></svg></div>
    </div>
  </div>
</section>

<!-- taskbar -->
<footer class="task fixed-bottom d-flex align-items-center">
  <button class="btn tb ms-2" style="width:38px" aria-label="Internet Explorer"><svg width="14" height="14" viewBox="0 0 14 14"><path d="M12 8.500H4c0 3.500 5 4 6.500 1.500M4 7c0-4 7-4 7 0H4" fill="none" stroke="#7fd0ff" stroke-width="2"/><path d="M1 12C0 9 7 1 13 2" fill="none" stroke="#f2c230" stroke-width="1.300"/></svg></button>
  <button class="btn tb cur" aria-label="File Explorer"><svg width="14" height="14" viewBox="0 0 12 12"><use href="#lib"/></svg></button>
  <button class="btn tb" style="width:34px" aria-label="Keyboard"><svg width="12" height="12"><path d="M0 1h4v5H0z" fill="#7b8ca8"/><path d="M5 1h3v5H5zM9 1h3v5H9z" fill="#b8405a"/><path d="M4 7h4v5H4z" fill="#8aa890"/></svg></button>
  <button class="btn tb run" aria-label="Chrome"><svg width="12" height="12" viewBox="0 0 12 12"><circle cx="6" cy="6" r="6" fill="#e33b2e"/><path d="M6 6L.8 3A6 6 0 006 12z" fill="#3aa757"/><path d="M6 6l2.500 1.500L6 12a6 6 0 005.200-9H6z" fill="#fbc116"/><circle cx="6" cy="6" r="2.600" fill="#fff"/><circle cx="6" cy="6" r="2" fill="#3f7de0"/></svg></button>
  <button class="btn tb run" aria-label="WinRAR"><svg width="14" height="13"><use href="#rar"/></svg></button>
  <button class="btn tb run" aria-label="Command Prompt"><svg width="12" height="10"><path d="M0 0h12v10H0z" fill="#111"/><path d="M0 0h12v2H0z" fill="#ddd"/><path d="M4 4.500H2v3h2M5 7.500v-3h2v3M9 7.500h1.500" fill="none" stroke="#fff"/></svg></button>
  <div class="tray ms-auto d-flex align-items-center justify-content-between">
    <svg class="i12" viewBox="0 0 12 12"><path d="M.5 5c3-4 8-4 11 0M2.500 7c2-2.500 5-2.500 7 0M4.500 9c1-1 2-1 3 0" fill="none" stroke="#e6f3ff" stroke-width="1.500"/><path d="M8 8h3v4H8z" fill="#e08a4a"/></svg>
    <svg class="i12" viewBox="0 0 12 12"><path d="M6 0c3 3 0 4 3 5 1-1 1-2 1-2 2 4 1 8-4 9-5 0-6-4-3-6 0 2 1 2 1 2 1-2 0-4 2-8z" fill="#eee"/><path d="M6 7c2 2 1 4 0 4s-2-2 0-4z" fill="#555"/></svg>
    <svg class="i12" viewBox="0 0 12 12"><path d="M1 10l4-5 4 1 2-4v5l-3 4-4-1z" fill="#d8cfd0"/><circle cx="6" cy="7" r="2.500" fill="#d3271f"/></svg>
    <svg class="i12" viewBox="0 0 12 12"><path d="M1.500 0v12" stroke="#fff" stroke-width="1.500"/><path d="M3 1h4v2h4v5H7V7H3z" fill="#f4f4f4" stroke="#444" stroke-width=".5"/></svg>
    <svg class="i12" viewBox="0 0 12 12"><ellipse cx="6" cy="6" rx="4.300" ry="6" fill="#0b2f6b"/><path d="M3.800 4l4.400 4L6 10V2l2.200 2-4.400 4" fill="none" stroke="#fff"/></svg>
    <svg class="i12" viewBox="0 0 12 12"><path d="M0 1h12v8H0zM3 10h6v2H3z" fill="#10203a"/><path d="M2 3l3 4 2-4 3 3" fill="none" stroke="#9fd0ff"/></svg>
    <svg class="i12" viewBox="0 0 12 12"><path d="M6 1l6 3-3 4-5-2z" fill="#e7c72e"/><path d="M0 4l6-3v5l-3 3z" fill="#2a78c8"/><path d="M3 6h6l-3 6z" fill="#2a9a38"/></svg>
    <svg class="i12" viewBox="0 0 12 12"><path d="M1 1l4 0 7 7v4H8L5 7l-5 4 2-6z" fill="#111"/><path d="M1 10l3-5 2 6z" fill="#ddd"/></svg>
    <svg class="i12" viewBox="0 0 12 12"><path d="M.5.500h11v11H.5z" fill="#a53448" stroke="#e8d0d4"/><path d="M3 3l3 6 3-6" fill="none" stroke="#fff" stroke-width="1.800"/></svg>
    <svg class="i12" viewBox="0 0 12 12"><circle cx="6" cy="6" r="6" fill="#0d2c3e"/><circle cx="6" cy="6" r="4.500" fill="#1b8fb5"/><path d="M8 4.500a2.500 2.500 0 100 3" fill="none" stroke="#06202e" stroke-width="1.500"/></svg>
    <svg class="i12" viewBox="0 0 12 12"><path d="M0 0h12v8H0z" fill="#777"/><path d="M2 1l8 6.500M10 1L2 7.500" stroke="#e01818" stroke-width="2"/><path d="M1 10h4v2H1zM7 10h4v2H7z" fill="#444"/></svg>
    <svg class="i12" viewBox="0 0 12 12"><path d="M1 1v3h4V1M3 4v8" fill="none" stroke="#fff" stroke-width="1.300"/><path d="M6.500 1.500h4.500v10H6.500z" fill="#9bb" stroke="#fff"/></svg>
    <svg class="i12" viewBox="0 0 12 12"><path d="M3.500 3h8v6h-8zM5 11.500h5M.500.500v3h3v-3M2 3.500V11" fill="none" stroke="#fff"/></svg>
    <svg class="i12" viewBox="0 0 12 12"><path d="M0 4h2l3-3v10L2 8H0z" fill="#fff"/><path d="M7 4c1 1 1 3 0 4M9 2.500c2 2 2 5 0 7" fill="none" stroke="#fff"/></svg>
  </div>
  <span class="ms-2 ps-1">ENG</span>
  <time class="ms-2 ps-1 me-2 clock">11:24 AM</time>
</footer>
<script src="https://cdn.jsdelivr.net/npm/bootstrap@5.3.0/dist/js/bootstrap.bundle.min.js"></script>
</body>
</html>
